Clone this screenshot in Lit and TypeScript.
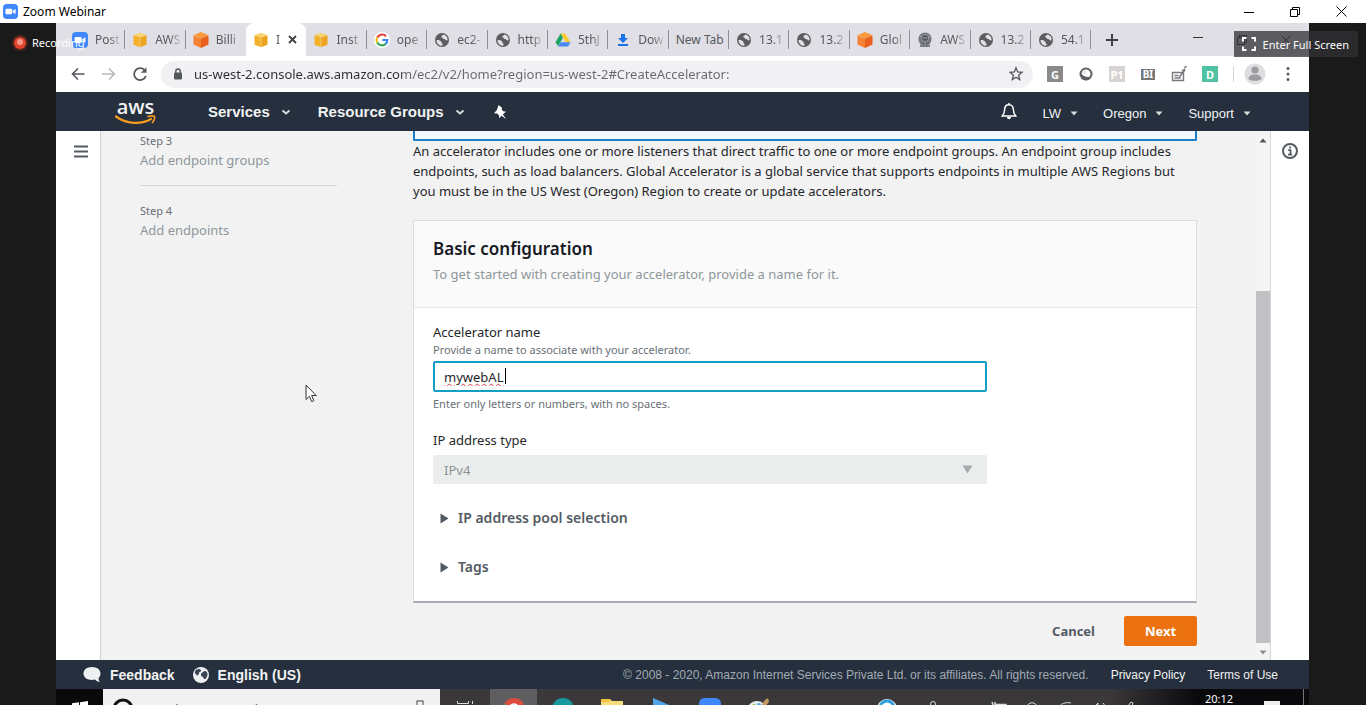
import { LitElement, html, svg, css, nothing } from "lit";
import { customElement, state } from "lit/decorators.js";
import { classMap } from "lit/directives/class-map.js";

type Glyph = unknown;

const icon = (w: number, h: number, body: Glyph, box = `0 0 ${w} ${h}`) =>
  html`<svg width=${w} height=${h} viewBox=${box} fill="none" aria-hidden="true">${body}</svg>`;

const zoomLogo = (s: number) =>
  icon(s, s, svg`<rect width="16" height="16" rx="4" fill="#4087fc"/><rect x="2.6" y="5" width="7.2" height="6" rx="1.4" fill="#fff"/><path d="M10.4 7.2 13.4 5.2v5.6l-3-2z" fill="#fff"/>`, "0 0 16 16");

const favicons: Record<string, Glyph> = {
  zoom: zoomLogo(16),
  cube: icon(16, 16, svg`<path d="M8 1l6.500 2L8 5 1.500 3z" fill="#f9cf5c"/><path d="M1.500 3.300 8 5.300v9.900L1.500 12.800z" fill="#f3b02b"/><path d="M14.500 3.300 8 5.300v9.900l6.500-2.400z" fill="#eda421"/><path d="M8 5v10M5 2l6.500 2" stroke="#fbe2a0" stroke-width=".600"/>`),
  box: icon(16, 16, svg`<path d="M8 0 15.500 3.200 8 6.400.500 3.200z" fill="#fa9a3c"/><path d="M.500 3.500 8 6.600V16L.500 12.600z" fill="#f58233"/><path d="M15.500 3.500 8 6.600V16l7.500-3.400z" fill="#e8601c"/>`),
  google: icon(16, 16, svg`<circle cx="8" cy="8" r="8" fill="#fff"/><path d="M12 4.200A5.400 5.400 0 0 0 3.200 5.600" stroke="#ea4335" stroke-width="2.200"/><path d="M3.200 5.500a5.400 5.400 0 0 0 0 5" stroke="#fbbc05" stroke-width="2.200"/><path d="M3.200 10.400a5.400 5.400 0 0 0 8.400 1.600" stroke="#34a853" stroke-width="2.200"/><path d="M11.400 12.200A5.200 5.200 0 0 0 13.300 8H8.200" stroke="#4285f4" stroke-width="2.200"/>`),
  globe: icon(16, 16, svg`<circle cx="8" cy="8" r="7" fill="#5b5d61"/><path d="M2.500 8.200c1.800-.600 3.600.100 4.600 1.300.800 1 .200 1.600 1.200 2.200.700.500.300 1.500-.300 2.100C4.900 13.600 2.600 11.400 2.500 8.200zM9.300 2.600c-.400 1.200-1.600.900-2 1.900-.300.900 1.200 1 1.700 1.900.500 1 1.900.400 2.500 1.300.400.600 1.500.900 2.100.600C13.900 5.500 12 3 9.300 2.600z" fill="#e0e0e5"/>`),
  drive: icon(16, 16, svg`<path d="M5.600 1.500h4.800l5.100 8.800h-4.900z" fill="#fbc934"/><path d="M5.600 1.500 8 5.700 3.100 14.300.500 10.300z" fill="#1da362"/><path d="M5.600 10.300h9.900L13 14.500H3.100z" fill="#4688f4"/>`),
  download: icon(16, 16, svg`<path d="M6 2h4v4h3l-5 5-5-5h3z" fill="#1a73e8"/><path d="M3 12h10v2H3z" fill="#1a73e8"/>`),
  badge: icon(16, 16, svg`<circle cx="8" cy="7" r="6.600" fill="#73797f"/><circle cx="8" cy="6" r="3.600" fill="#4f565d" stroke="#9a9fa5"/><path d="M4 11h8l1 4H3z" fill="#5e656c"/><path d="M5 12v3M8 11v4M11 12v3M3 4l2 1M13 4l-2 1M6 6h4" stroke="#a5a9ae"/>`),
};

interface Tab { label: string; glyph?: string; active?: boolean; }

const TABS: Tab[] = [
  { label: "Post", glyph: "zoom" },
  { label: "AWS", glyph: "cube" },
  { label: "Billi", glyph: "box" },
  { label: "I", glyph: "cube", active: true },
  { label: "Inst", glyph: "cube" },
  { label: "ope", glyph: "google" },
  { label: "ec2-", glyph: "globe" },
  { label: "http", glyph: "globe" },
  { label: "5thJ", glyph: "drive" },
  { label: "Dow", glyph: "download" },
  { label: "New Tab" },
  { label: "13.1", glyph: "globe" },
  { label: "13.2", glyph: "globe" },
  { label: "Glol", glyph: "box" },
  { label: "AWS", glyph: "badge" },
  { label: "13.2", glyph: "globe" },
  { label: "54.1", glyph: "globe" },
];

const caret = icon(8, 5, svg`<path d="M.500.500h7L4 4.500z" fill="#d5dbdb"/>`);
const chevron = icon(10, 6, svg`<path d="M1.500 1.500 5 4.500l3.500-3" stroke="#d5dbdb" stroke-width="2"/>`);

const base = css`
  * { box-sizing: border-box; }
  button, input, select { font: inherit; color: inherit; background: none; border: 0; padding: 0; margin: 0; outline: 0; }
  a { color: inherit; text-decoration: none; }
  svg { display: block; flex: none; }
`;

@customElement("title-bar")
export class TitleBar extends LitElement {
  static styles = [base, css`
    :host { display: flex; align-items: center; height: 23px; padding: 0 2px 0 3px; background: #fff; color: #000; font-size: 12px; }
    .name { margin-left: 5px; flex: 1; white-space: nowrap; }
    .ctl { width: 46px; height: 23px; display: grid; place-items: center; }
  `];
  render() {
    return html`${zoomLogo(15)}<span class="name">Zoom Webinar</span>
      <button class="ctl" aria-label="Minimize">${icon(10, 10, svg`<path d="M0 5.500h10" stroke="#000"/>`)}</button>
      <button class="ctl" aria-label="Restore">${icon(10, 10, svg`<path d="M.500 2.500h7v7h-7zM2.500 2.500v-2h7v7h-2" stroke="#000"/>`)}</button>
      <button class="ctl" aria-label="Close">${icon(11, 11, svg`<path d="M.500.500l10 10M10.500.500l-10 10" stroke="#000"/>`)}</button>`;
  }
}

@customElement("browser-chrome")
export class BrowserChrome extends LitElement {
  static styles = [base, css`
    :host { display: block; color: #55585d; }
    .strip { display: flex; align-items: center; height: 33px; padding-left: 9px; background: #dfdfe5; }
    .tabs { display: grid; grid-template-columns: repeat(17, minmax(0, 1fr)); flex: 0 0 82.5%; height: 33px; }
    .tab { display: flex; align-items: center; gap: 7px; height: 33px; padding: 0 3px 0 7px; font-size: 12px; min-width: 0;
      background: linear-gradient(#8e8e95, #8e8e95) right 7px / 1px 19px no-repeat; }
    .tab.active { background: #fff; border-radius: 8px 8px 0 0; }
    .tab.quiet { background: none; }
    .text { flex: 1; min-width: 0; overflow: hidden; white-space: nowrap; text-align: left; mask-image: linear-gradient(90deg, #000 50%, transparent); }
    .text.full { mask-image: none; }
    .tab.active .text { flex: 0 0 5px; }
    .plus { margin-left: 15px; }
    .win { margin-left: auto; display: flex; gap: 34px; align-items: center; padding-right: 18px; height: 33px; }
    .bar { display: flex; align-items: center; height: 36px; padding-left: 14px; background: #fff; }
    .nav { display: flex; gap: 15px; }
    .pill { display: flex; align-items: center; flex: 1; height: 27px; margin-left: 13px; padding: 0 8px 0 12px; border-radius: 14px; background: #f1f1f4; }
    .url { flex: 1; min-width: 0; margin: 0 10px 0 11px; font-size: 13px; color: transparent; caret-color: #333;
      background: linear-gradient(90deg, #2b2d31 208px, #66696e 208px); background-clip: text; -webkit-background-clip: text; }
    .exts { display: flex; align-items: center; gap: 15px; padding: 0 15px 0 14px; }
    .ext { width: 16px; height: 16px; display: grid; place-items: center; font-size: 11px; font-weight: 700; color: #fff; }
    .g { background: #8a8a8a; }
    .p { background: #d8d3d3; }
    .d { background: #4ec2a2; }
    .bi { width: 14px; height: 11px; background: #77777a; font-size: 10px; line-height: 11px; }
    .rule { width: 1px; height: 16px; background: #d5d5d9; }
    .me { display: flex; align-items: center; gap: 18px; padding: 0 17px 0 10px; }
  `];
  render() {
    return html`
      <div class="strip">
        <div class="tabs" role="tablist">
          ${TABS.map((t, i) => html`<button role="tab" aria-selected=${t.active ? "true" : "false"}
            class=${classMap({ tab: true, active: !!t.active, quiet: !!TABS[i + 1]?.active })}>
            ${t.glyph ? favicons[t.glyph] : nothing}<span class=${classMap({ text: true, full: !t.glyph })}>${t.label}</span>
            ${t.active ? icon(9, 9, svg`<path d="M1 1l7 7M8 1 1 8" stroke="#3c3f43" stroke-width="1.800"/>`) : nothing}
          </button>`)}
        </div>
        <button class="plus" aria-label="New tab">${icon(12, 12, svg`<path d="M6 0v12M0 6h12" stroke="#3c3f43" stroke-width="2"/>`)}</button>
        <div class="win">
          ${icon(10, 10, svg`<path d="M0 2.500h10" stroke="#333"/>`)}
          ${icon(10, 10, svg`<path d="M.500 2.500h7v7h-7zM2.500 2.500v-2h7v7h-2" stroke="#333"/>`)}
          ${icon(10, 10, svg`<path d="M.500.500l9 9M9.500.500l-9 9" stroke="#333"/>`)}
        </div>
      </div>
      <div class="bar">
        <div class="nav">
          <button aria-label="Back">${icon(16, 16, svg`<path d="M14.500 8H2.500M8 2.500 2.500 8 8 13.500" stroke="#55585d" stroke-width="1.600"/>`)}</button>
          <button aria-label="Forward">${icon(16, 16, svg`<path d="M1 8h12.500M8 2.500 13.500 8 8 13.500" stroke="#b9babd" stroke-width="1.600"/>`)}</button>
          <button aria-label="Reload">${icon(16, 16, svg`<path d="M13 4.600A6 6 0 1 0 13.800 10" stroke="#55585d" stroke-width="1.800"/><path d="M14.500 1.200v5.600H8.900z" fill="#55585d"/>`)}</button>
        </div>
        <div class="pill">
          ${icon(10, 12, svg`<rect x="1" y="4.500" width="8" height="7" rx="1" fill="#55585d"/><path d="M2.800 5V3.200a2.200 2.200 0 0 1 4.400 0V5" stroke="#55585d" stroke-width="1.400"/>`)}
          <input class="url" aria-label="Address" spellcheck="false" .value=${"us-west-2.console.aws.amazon.com/ec2/v2/home?region=us-west-2#CreateAccelerator:"}>
          <button aria-label="Bookmark">${icon(16, 16, svg`<path d="m7 1.800 1.600 4.200 4.400.300-3.400 2.900 1.100 4.300L7 11.200l-3.700 2.300 1.100-4.300L1 6.300 5.400 6z" stroke="#55585d" stroke-width="1.300"/>`)}</button>
        </div>
        <div class="exts">
          <span class="ext g">G</span>
          ${icon(16, 16, svg`<circle cx="8" cy="8" r="5.500" stroke="#5e6064" stroke-width="2"/><path d="M3 12a6 6 0 0 0 10.500-2C11 12 5 11 3 7z" fill="#5e6064"/><circle cx="6.500" cy="6.500" r="2" fill="#e9e9ea"/>`)}
          <span class="ext p">P1</span>
          <span class="ext"><span class="ext bi">BI</span></span>
          ${icon(16, 16, svg`<path d="M1.500 6.500h11v8h-11zM3.500 9.500h4M3.500 12h6M8 12l6-9M13 2l3-2M11 4l3 1" stroke="#77797d" stroke-width="1.400"/>`)}
          <span class="ext d">D</span>
        </div>
        <span class="rule"></span>
        <div class="me">
          <button aria-label="Profile">${icon(22, 22, svg`<circle cx="11" cy="11" r="10.500" fill="#dedee0"/><circle cx="11" cy="7" r="3.600" fill="#9b9ca0"/><path d="M4.500 16c0-3 3-4.400 6.500-4.400s6.500 1.400 6.500 4.400c-2 2.400-11 2.400-13 0z" fill="#9b9ca0"/>`)}</button>
          <button aria-label="Menu">${icon(8, 14, svg`<path d="M4 1.500v.01M4 7v.01M4 12.500v.01" stroke="#55585d" stroke-width="3" stroke-linecap="round"/>`)}</button>
        </div>
      </div>`;
  }
}

@customElement("aws-nav")
export class AwsNav extends LitElement {
  static styles = [base, css`
    :host { display: flex; align-items: center; height: 39px; padding: 0 58px 0 59px; background: #252f3e; color: #f2f3f3; font-family: "Liberation Sans", Arial, sans-serif; }
    .logo { display: flex; flex-direction: column; align-items: center; width: 41px; font: 600 20px/16px "Open Sans", sans-serif; }
    .menu { display: flex; align-items: center; gap: 11px; font-size: 15px; font-weight: 700; }
    .first { margin-left: 52px; }
    .second { margin: 0 28px 0 27px; }
    .small { display: flex; align-items: center; gap: 9px; font-size: 13px; margin-left: 25px; padding-top: 3px; }
    .bell { margin-left: auto; }
    .bell + .small { margin-left: 26px; }
  `];
  render() {
    return html`
      <a class="logo" href="#" aria-label="AWS home"><span>aws</span>
        ${icon(41, 10, svg`<path d="M1 1.500C11 9 26 10 36 4" stroke="#f79a1e" stroke-width="2.200" stroke-linecap="round"/><path d="M32.500 1.600c3-1 6.500-1 7 0s-.500 4.500-2.500 6.400" stroke="#f79a1e" stroke-width="1.700"/>`)}
      </a>
      <button class="menu first">Services ${chevron}</button>
      <button class="menu second">Resource Groups ${chevron}</button>
      <button aria-label="Pin">${icon(14, 14, svg`<path d="M5.500 0 9 2.800l-.200 2 2 1.600 2.400.200L9.800 9.600 13.300 14 8.400 10.800 6.300 13.300 6 10.500 4.200 8.400 1 8.300 3.900 5z" fill="#fff"/>`)}</button>
      <button class="bell" aria-label="Notifications">${icon(16, 17, svg`<path d="M8 1.700c-3 0-4.400 2.200-4.400 5 0 3.200-.800 4.500-2.300 6.300h13.400c-1.500-1.800-2.300-3.100-2.300-6.300 0-2.800-1.400-5-4.400-5z" stroke="#fff" stroke-width="1.500"/><path d="M6 14h4c0 3-4 3-4 0z" fill="#fff"/><path d="M8 0v2" stroke="#fff" stroke-width="1.500"/>`)}</button>
      <button class="small">LW ${caret}</button>
      <button class="small">Oregon ${caret}</button>
      <button class="small">Support ${caret}</button>`;
  }
}

@customElement("console-page")
export class ConsolePage extends LitElement {
  @state() private name = "mywebAL";
  static styles = [base, css`
    :host { display: flex; flex: 1; min-height: 0; background: #f2f2f3; color: #25272b; font-size: 13px; line-height: 20px; overflow: hidden; }
    .rail { flex: none; width: 45px; padding: 14px 0 0 18px; background: #fff; border-right: 1px solid #cfd0d4; }
    .info { flex: none; width: 39px; padding: 12px 0 0 11px; background: #fff; border-left: 1px solid #d6d6da; }
    .rail button, .info button { display: block; }
    .page { flex: 1; min-width: 0; display: flex; padding: 0 58px 0 39px; }
    .steps { flex: none; width: 197px; margin-right: 76px; }
    .no { font-size: 11px; line-height: 20px; color: #687078; }
    .step { color: #8d979b; line-height: 18px; padding-bottom: 16px; margin-bottom: 15px; border-bottom: 1px solid #d8d5de; }
    .step.last { border: 0; }
    .main { flex: 1; min-width: 0; }
    .flash { height: 10px; border: 2px solid #1a7fc4; border-top: 0; background: #f1f9ff; border-radius: 0 0 2px 2px; }
    .lead { margin: 0; white-space: nowrap; }
    .card { margin-top: 19px; background: #fff; border: 1px solid #dcdde0; border-bottom: 2px solid #a7abb3; }
    .head { height: 87px; padding: 18px 19px 0; background: #fafafa; border-bottom: 1px solid #e6e7ea; }
    .title { margin: 0; font-size: 17px; line-height: 20px; font-weight: 600; color: #16191f; }
    .desc { margin: 5px 0 0; color: #8d979b; }
    .body { padding: 14px 19px 24px; }
    .fields { width: 554px; max-width: 100%; }
    .label { display: block; }
    .hint { font-size: 11px; line-height: 16px; color: #687078; margin: 0; }
    .box { position: relative; margin: 3px 0 4px; }
    .input { display: block; width: 100%; height: 31px; padding: 0 9px; border: 2px solid #149fc4; border-radius: 2px; background: #fff; text-decoration: underline wavy 1px #e0393e; text-underline-offset: 1px; }
    .bar { position: absolute; left: 72px; top: 7px; width: 1px; height: 16px; background: #000; }
    .second { margin-top: 18px; }
    .drop { position: relative; margin: 5px 0 24px; }
    .select { display: block; width: 100%; height: 29px; padding: 0 11px; appearance: none; border-radius: 2px; background: #ebeded; color: #8a9396; opacity: 1; }
    .drop svg { position: absolute; right: 14px; top: 10px; }
    .more { display: flex; align-items: center; gap: 9px; height: 20px; padding-left: 7px; margin-bottom: 29px; font-size: 14px; font-weight: 600; color: #545b64; }
    .more.end { margin-bottom: 0; }
    .actions { display: flex; justify-content: flex-end; align-items: center; gap: 29px; margin-top: 13px; font-weight: 700; }
    .cancel { color: #545b64; }
    .next { width: 73px; height: 30px; background: #ec7211; color: #fff; border-radius: 2px; }
    .track { flex: none; width: 15px; display: flex; flex-direction: column; align-items: center; padding: 7px 0 5px; background: #f4f4f5; }
    .thumb { flex: 1; width: 14px; margin: 148px 0 7px; background: #c1c1c3; }
  `];
  render() {
    const tri = icon(9, 11, svg`<path d="M.500.500 8.500 5.500l-8 5z" fill="#545b64"/>`);
    return html`
      <div class="rail"><button aria-label="Open navigation">${icon(14, 13, svg`<path d="M0 1.500h14M0 6.500h14M0 11.500h14" stroke="#545b64" stroke-width="2"/>`)}</button></div>
      <div class="page">
        <nav class="steps" aria-label="Steps">
          <div class="no">Step 3</div><div class="step">Add endpoint groups</div>
          <div class="no">Step 4</div><div class="step last">Add endpoints</div>
        </nav>
        <main class="main">
          <div class="flash"></div>
          <p class="lead">An accelerator includes one or more listeners that direct traffic to one or more endpoint groups. An endpoint group includes<br>endpoints, such as load balancers. Global Accelerator is a global service that supports endpoints in multiple AWS Regions but<br>you must be in the US West (Oregon) Region to create or update accelerators.</p>
          <section class="card">
            <header class="head">
              <h2 class="title">Basic configuration</h2>
              <p class="desc">To get started with creating your accelerator, provide a name for it.</p>
            </header>
            <div class="body">
              <div class="fields">
                <label class="label" for="name">Accelerator name</label>
                <p class="hint">Provide a name to associate with your accelerator.</p>
                <div class="box">
                  <input class="input" id="name" spellcheck="false" .value=${this.name}
                    @input=${(e: Event) => (this.name = (e.target as HTMLInputElement).value)}>
                  <span class="bar"></span>
                </div>
                <p class="hint">Enter only letters or numbers, with no spaces.</p>
                <label class="label second" for="ip">IP address type</label>
                <div class="drop">
                  <select class="select" id="ip" disabled><option>IPv4</option></select>
                  ${icon(11, 9, svg`<path d="M.500.500h10l-5 8z" fill="#a3abae"/>`)}
                </div>
              </div>
              <button class="more" aria-expanded="false">${tri}IP address pool selection</button>
              <button class="more end" aria-expanded="false">${tri}Tags</button>
            </div>
          </section>
          <div class="actions"><button class="cancel">Cancel</button><button class="next">Next</button></div>
        </main>
      </div>
      <div class="track">
        ${icon(8, 5, svg`<path d="M.500 4.500h7L4 .500z" fill="#505050"/>`)}
        <div class="thumb"></div>
        ${icon(8, 5, svg`<path d="M.500.500h7L4 4.500z" fill="#8c8c8c"/>`)}
      </div>
      <div class="info"><button aria-label="Info">${icon(16, 16, svg`<circle cx="8" cy="8" r="7" stroke="#545b64" stroke-width="2"/><path d="M8 3.600v2M6.200 7.200H8.500v4.200M6 11.600h4.200" stroke="#545b64" stroke-width="1.800"/>`)}</button></div>`;
  }
}

@customElement("aws-footer")
export class AwsFooter extends LitElement {
  static styles = [base, css`
    :host { display: flex; align-items: center; height: 29px; padding: 0 31px 0 27px; background: #252f3e; color: #f2f3f3; font: 12px "Liberation Sans", Arial, sans-serif; white-space: nowrap; }
    .item { display: flex; align-items: center; gap: 9px; margin-right: 18px; font-size: 14px; font-weight: 700; }
    .copy { margin-left: auto; color: #a3abb3; }
    .link { margin-left: 22px; }
  `];
  render() {
    return html`
      <button class="item">${icon(18, 17, svg`<path d="M9 1C4 1 .500 3.800.500 7.500S4 14 9 14c1 0 2-.100 3-.400 1.200 1.400 3 2.400 5 2.400-1-1-1.500-2.500-1.400-4 1.200-1.200 1.900-2.700 1.900-4.500C17.500 3.800 14 1 9 1z" fill="#eef0f2"/>`)}Feedback</button>
      <button class="item">${icon(16, 16, svg`<circle cx="8" cy="8" r="8" fill="#eef0f2"/><path d="M3.500 2.500C5.500 1.500 8 2 8 3.500S5.500 5 6 6.500 4 7 4.500 8.500 2.500 7 2 6 2.500 3.500 3.500 2.500zM10 5c1.500-1.500 3-1 4 .500s.500 3.500-.500 5S11 13 10.500 11 8.500 10 8 8.500 8.500 6 10 5z" fill="#3a4452"/>`)}English (US)</button>
      <span class="copy">© 2008 - 2020, Amazon Internet Services Private Ltd. or its affiliates. All rights reserved.</span>
      <a class="link" href="#">Privacy Policy</a><a class="link" href="#">Terms of Use</a>`;
  }
}

@customElement("task-bar")
export class TaskBar extends LitElement {
  static styles = [base, css`
    :host { display: block; flex: none; height: 16px; overflow: hidden; }
    .row { display: flex; height: 40px; background: linear-gradient(90deg, #3b383a 84%, #0a0a0c 91%); color: #fff; }
    .tile { flex: none; width: 49px; display: grid; place-items: center; }
    .start { width: 47px; background: #0a0a0b; }
    .search { display: flex; align-items: center; flex: 0 1 337px; padding: 0 14px 0 9px; gap: 9px; background: #f1f1f1; color: #555; font-size: 13px; }
    .query { flex: 1; min-width: 0; }
    .query::placeholder { color: #555; opacity: 1; }
    .view { width: 50px; }
    .on { width: 47px; background: #5e5e60; margin-right: 1px; }
    .tray { display: flex; align-items: center; gap: 17px; margin-left: auto; padding-right: 23px; font-size: 11px; }
    .pinned { margin-right: 11px; }
    .clock { display: grid; width: 56px; padding: 2px 0; text-align: center; align-self: start; line-height: 16px; }
    .edge { width: 1px; background: #77777a; margin-right: 5px; }
  `];
  render() {
    return html`<div class="row">
      <button class="tile start" aria-label="Start">${icon(16, 16, svg`<path d="M0 2.300 7 1.300V7.500H0zM8 1.200 16 0v7.500H8zM0 8.500h7v6.200l-7-1zM8 8.500h8V16l-8-1.200z" fill="#fff"/>`)}</button>
      <label class="search">${icon(22, 22, svg`<circle cx="11" cy="11" r="9" stroke="#111" stroke-width="3"/>`)}
        <input class="query" aria-label="Search" placeholder="Type here to search">
        ${icon(12, 18, svg`<rect x="3" y="1" width="6" height="10" stroke="#444"/><path d="M1 8v5h10V8M6 13v4" stroke="#444"/>`)}</label>
      <button class="tile view" aria-label="Task view">${icon(18, 16, svg`<path d="M1.500 0v2.500h11V0M1 5.500h12v6H1zM1.500 16v-2.500h11V16M16.500 0v3M16.500 5v11" stroke="#ddd"/>`)}</button>
      <button class="tile on" aria-label="Chrome">${icon(22, 24, svg`<circle cx="11" cy="12" r="11" fill="#dd4a3e"/><path d="M1.500 6.500A11 11 0 0 0 11 23l4-8-8-1z" fill="#1da362"/><path d="M11 8h10.500A11 11 0 0 1 11 23z" fill="#fbc934"/><circle cx="11" cy="12" r="5" fill="#4688f4" stroke="#fff" stroke-width="1.500"/>`)}</button>
      <button class="tile" aria-label="Arduino">${icon(22, 24, svg`<circle cx="11" cy="12" r="11" fill="#16989c"/><circle cx="7" cy="12" r="3" stroke="#fff" stroke-width="2"/><circle cx="15" cy="12" r="3" stroke="#fff" stroke-width="2"/>`)}</button>
      <button class="tile" aria-label="File Explorer">${icon(22, 20, svg`<path d="M0 0h9l2 2h11v18H0z" fill="#f7dc7e"/><path d="M0 0h9v3H0z" fill="#f0c23d"/>`)}</button>
      <button class="tile" aria-label="Player">${icon(16, 22, svg`<path d="M0 0 16 7v8L0 22z" fill="#4fa3e8"/>`)}</button>
      <button class="tile" aria-label="Zoom">${zoomLogo(22)}</button>
      <button class="tile" aria-label="Paint">${icon(22, 22, svg`<ellipse cx="9" cy="11" rx="9" ry="8" fill="#e6ecef"/><circle cx="6" cy="8" r="2" fill="#8fc04a"/><circle cx="11" cy="7" r="2" fill="#5aa3df"/><path d="M10 12 17 2l3-2 1 4-8 9z" fill="#c59a63"/>`)}</button>
      <div class="tray">
        <span class="pinned">${icon(20, 20, svg`<circle cx="10" cy="10" r="10" fill="#fff"/><path d="M3 9a7 7 0 0 1 14 0" stroke="#2f9fdb" stroke-width="3"/><circle cx="10" cy="10" r="4" fill="#2f9fdb"/>`)}</span>
        ${icon(16, 16, svg`<circle cx="8" cy="3" r="2.500" stroke="#ddd"/><path d="M3 15c0-10 10-10 10 0" stroke="#ddd"/>`)}
        ${icon(16, 8, svg`<path d="M3 6l5-5 5 5" stroke="#ddd"/>`)}
        ${icon(16, 16, svg`<path d="M1 1l1 3M4 1v3M5 3.500h10v8H5z" stroke="#ddd" stroke-width="1.500"/>`)}
        ${icon(16, 16, svg`<path d="M3 7c0-7 10-7 10 0v4H3z" stroke="#ddd"/>`)}
        ${icon(16, 16, svg`<path d="M1 8C3 2 9 1 14 2M4 10c1-4 6-5 9-4" stroke="#ddd"/>`)}
        ${icon(16, 16, svg`<path d="M1 6h3l4-4v12l-4-4H1zM10 4c2 2 2 5 0 8M13 2c3 3 3 9 0 12" stroke="#ddd"/>`)}
        ${icon(12, 16, svg`<path d="M1 10 8 1l2 1-4 12" stroke="#ddd"/>`)}
        <span>ENG</span>
        <span class="clock">20:12</span>
        ${icon(16, 16, svg`<path d="M0 0h16v13H8l-3 3v-3H0z" fill="#eee"/><path d="M3 4.500h10M3 7.500h10" stroke="#333"/>`)}
      </div>
      <span class="edge"></span>
    </div>`;
  }
}

@customElement("app-root")
export class AppRoot extends LitElement {
  static styles = [base, css`
    :host { display: flex; flex-direction: column; height: 100vh; position: relative; overflow: hidden; background: #1a1a1a; font-family: "Noto Sans", "Open Sans", sans-serif; }
    .stage { flex: 1; min-height: 0; display: flex; flex-direction: column; margin: 0 57px 0 56px; overflow: hidden; }
    .rec { position: absolute; left: 11px; top: 34px; display: flex; align-items: center; gap: 3px; color: #fff; font-size: 11px; line-height: 18px; }
    .full { position: absolute; right: 8px; top: 31px; display: flex; align-items: center; gap: 7px; height: 26px; padding: 0 9px 0 8px; background: rgba(50, 50, 52, 0.75); color: #fff; font-size: 11px; white-space: nowrap; }
    .pointer { position: absolute; left: 305px; top: 384px; }
  `];
  render() {
    return html`
      <title-bar></title-bar>
      <div class="stage">
        <browser-chrome></browser-chrome>
        <aws-nav></aws-nav>
        <console-page></console-page>
        <aws-footer></aws-footer>
        <task-bar></task-bar>
      </div>
      <div class="rec">${icon(18, 18, svg`<circle cx="9" cy="9" r="8" fill="#b3391b" opacity=".35"/><circle cx="9" cy="9" r="6" fill="#e2452f"/><circle cx="9" cy="8" r="3" fill="#f79a8b"/>`)}Recording</div>
      <button class="full">${icon(14, 14, svg`<path d="M1 4.500V1h3.500M9.500 1H13v3.500M13 9.500V13H9.500M4.500 13H1V9.500" stroke="#fff" stroke-width="2"/>`)}Enter Full Screen</button>
      <div class="pointer">${icon(12, 19, svg`<path d="M1 1v14.500l3.400-3.200 2.300 5.300 2.200-1-2.300-5.100h4.600z" fill="#fff" stroke="#333"/>`)}</div>`;
  }
}
